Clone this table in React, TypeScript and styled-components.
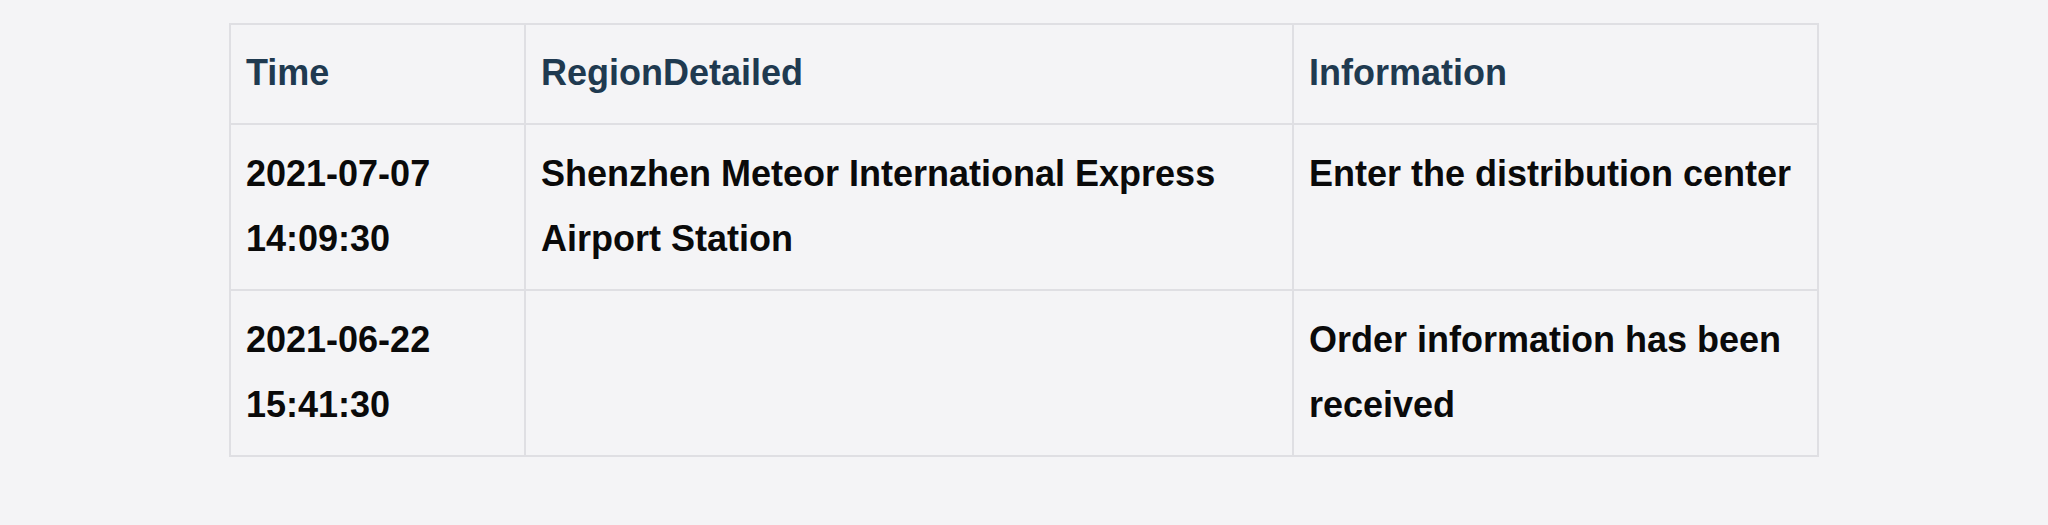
import React from 'react'
import styled, { createGlobalStyle } from 'styled-components'

const GlobalStyle = createGlobalStyle`
  html, body {
    margin: 0;
    padding: 0;
    background: #f4f4f6;
  }
  body {
    font-family: "Liberation Sans", Arial, Helvetica, sans-serif;
  }
`

const Page = styled.div`
  padding-top: 23px;
  display: flex;
  justify-content: center;
`

const Table = styled.table`
  width: 1588px;
  table-layout: fixed;
  border-collapse: collapse;
  border: 2px solid #dfdfe3;
`

const Th = styled.th`
  padding: 15px 16px 18px 15px;
  border: 2px solid #dfdfe3;
  text-align: left;
  vertical-align: top;
  font-size: 36px;
  line-height: 65px;
  font-weight: 700;
  color: #1f3a50;
`

const Td = styled.td`
  padding: 16px 16px 18px 15px;
  border: 2px solid #dfdfe3;
  vertical-align: top;
  font-size: 36px;
  line-height: 65px;
  font-weight: 700;
  color: #0a0a0a;
`

type Row = { time: string; region: string; info: string }

const rows: Row[] = [
  {
    time: '2021-07-07 14:09:30',
    region: 'Shenzhen Meteor International Express Airport Station',
    info: 'Enter the distribution center',
  },
  {
    time: '2021-06-22 15:41:30',
    region: '',
    info: 'Order information has been received',
  },
]

export default function App() {
  return (
    <>
      <GlobalStyle />
      <Page>
        <Table>
          <colgroup>
            <col style={{ width: 295 }} />
            <col style={{ width: 768 }} />
            <col style={{ width: 525 }} />
          </colgroup>
          <thead>
            <tr>
              <Th>Time</Th>
              <Th>RegionDetailed</Th>
              <Th>Information</Th>
            </tr>
          </thead>
          <tbody>
            {rows.map((r, i) => (
              <tr key={i}>
                <Td>{r.time}</Td>
                <Td>{r.region}</Td>
                <Td>{r.info}</Td>
              </tr>
            ))}
          </tbody>
        </Table>
      </Page>
    </>
  )
}
